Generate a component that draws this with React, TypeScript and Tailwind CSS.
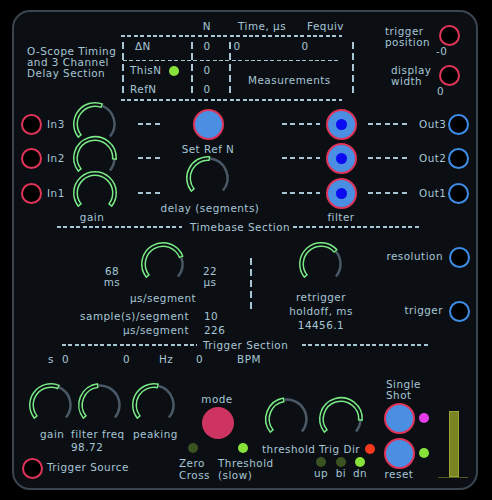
import React from "react";

// dashed rules and bars, drawn as repeating gradients
const DASH =
  "h-[1.5px] shrink-0 bg-[repeating-linear-gradient(90deg,#a8c6d4_0_4px,transparent_4px_6.4px)]";
const BIGDASH =
  "h-[1.5px] shrink-0 bg-[repeating-linear-gradient(90deg,#a8c6d4_0_5px,transparent_5px_8.4px)]";
const VBAR =
  "w-[1.5px] h-[54px] shrink-0 bg-[repeating-linear-gradient(180deg,#a8c6d4_0_7px,transparent_7px_11px)]";

const polar = (a: number, r: number) => {
  const rad = (a * Math.PI) / 180;
  return [23 + r * Math.sin(rad), 23 - r * Math.cos(rad)];
};

const arc = (a0: number, a1: number, r = 19.5) => {
  const [x0, y0] = polar(a0, r);
  const [x1, y1] = polar(a1, r);
  const large = a1 - a0 > 180 ? 1 : 0;
  return `M ${x0} ${y0} A ${r} ${r} 0 ${large} 1 ${x1} ${y1}`;
};

// value: pointer angle in degrees from top, -130..130
const Knob = ({ value, className = "" }: { value: number; className?: string }) => (
  <svg width="46" height="46" viewBox="0 0 46 46" className={`shrink-0 overflow-visible ${className}`}>
    {value < 129 && <path d={arc(value, 130)} stroke="#4a5866" strokeWidth="2.5" fill="none" />}
    <path d={arc(-130, value)} stroke="#7aeb86" strokeWidth="5" fill="none" />
    <path d={arc(-126, value - 4)} stroke="#0b0f14" strokeWidth="2" fill="none" />
  </svg>
);

const Jack = ({ blue = false, className = "" }: { blue?: boolean; className?: string }) => (
  <div
    className={`w-[21px] h-[21px] shrink-0 rounded-full border-2 bg-black ${
      blue ? "border-[#3e8ee8]" : "border-[#e03459]"
    } ${className}`}
  />
);

const Pad = ({ dot = false, className = "" }: { dot?: boolean; className?: string }) => (
  <div
    className={`w-[31px] h-[31px] shrink-0 rounded-full border-[2.5px] border-[#e03459] bg-[#4a8fe2] flex items-center justify-center ${className}`}
  >
    {dot && <div className="w-[11px] h-[11px] rounded-full bg-[#0b0bf2]" />}
  </div>
);

const Led = ({ className = "" }: { className?: string }) => (
  <div className={`w-[10px] h-[10px] shrink-0 rounded-full ${className}`} />
);

const channels = [
  { row: "row-start-1", name: "3", gain: 22 },
  { row: "row-start-2", name: "2", gain: 95 },
  { row: "row-start-3", name: "1", gain: 130 },
];

export default function App() {
  return (
    <div className="w-[492px] h-[500px] bg-black pt-[10px] pl-[12px] overflow-hidden font-['DejaVu_Sans',sans-serif] text-[10.4px] tracking-[0.5px] text-[#a8c6d4]">
      <div className="w-[466px] h-[480px] rounded-[18px] border-2 border-[#3a4550] bg-[#0b0f14] flex flex-col">
        {/* title, readout table, trigger position / display width */}
        <div className="h-[94px] shrink-0 flex whitespace-nowrap">
          <div className="w-[106px] shrink-0 pl-[13px] pt-[34px] leading-[11px]">
            <div>O-Scope Timing</div>
            <div>and 3 Channel</div>
            <div>Delay Section</div>
          </div>

          <div className="w-[238px] shrink-0 grid">
            <div className="col-start-1 row-start-1 flex flex-col">
              <div className="h-[8px]" />
              <div className="h-[12px] leading-[12px] flex">
                <span className="w-[80px] shrink-0" />
                <span className="w-[14px] shrink-0 text-center">N</span>
                <span className="w-[24px] shrink-0" />
                <span className="w-[69px] shrink-0">Time, μs</span>
                <span>Fequiv</span>
              </div>
              <div className="h-[8px] flex items-center">
                <div className={`ml-[1px] w-[221px] ${DASH}`} />
              </div>
              <div className="h-[12px] leading-[12px] flex">
                <span className="w-[15px] shrink-0" />
                <span className="w-[65px] shrink-0">ΔN</span>
                <span className="w-[14px] shrink-0 text-center">0</span>
                <span className="w-[16px] shrink-0" />
                <span className="w-[14px] shrink-0 text-center">0</span>
                <span className="w-[54px] shrink-0" />
                <span className="w-[14px] shrink-0 text-center">0</span>
              </div>
              <div className="h-[4px]" />
              <div className="h-[9px] flex items-center">
                <div className={`ml-[3px] w-[218px] ${DASH}`} />
              </div>
              <div className="h-[11px] leading-[11px] flex items-center">
                <span className="w-[10px] shrink-0" />
                <span className="w-[39px] shrink-0">ThisN</span>
                <Led className="bg-[#86e23b]" />
                <span className="w-[21px] shrink-0" />
                <span className="w-[14px] shrink-0 text-center">0</span>
              </div>
              <div className="h-[8px] leading-[8px] flex">
                <span className="w-[128px] shrink-0" />
                <span>Measurements</span>
              </div>
              <div className="h-[10px] leading-[10px] flex">
                <span className="w-[10px] shrink-0" />
                <span className="w-[70px] shrink-0">RefN</span>
                <span className="w-[14px] shrink-0 text-center">0</span>
              </div>
              <div className="h-[12px] flex items-center">
                <div className={`ml-[1px] w-[221px] ${DASH}`} />
              </div>
            </div>
            <div className="col-start-1 row-start-1 pt-[30px] flex items-start">
              <div className={`ml-[2px] ${VBAR}`} />
              <div className={`ml-[67.5px] ${VBAR}`} />
              <div className={`ml-[36.5px] ${VBAR}`} />
              <div className={`ml-[121.5px] ${VBAR}`} />
            </div>
          </div>

          <div className="w-[118px] shrink-0 flex flex-col">
            <div className="pt-[13px] flex items-start">
              <div className="ml-[27px] w-[53.5px] shrink-0 mt-[1px] leading-[11px]">
                <div>trigger</div>
                <div>position</div>
              </div>
              <Jack />
            </div>
            <div className="ml-[78px] -mt-[2px] leading-[10px]">-0</div>
            <div className="pt-[8.5px] flex items-start">
              <div className="ml-[33px] w-[47.5px] shrink-0 mt-[0.5px] leading-[11px]">
                <div>display</div>
                <div>width</div>
              </div>
              <Jack />
            </div>
            <div className="ml-[79px] -mt-[1px] leading-[10px]">0</div>
          </div>
        </div>

        {/* input / delay / filter / output channels */}
        <div className="h-[116px] shrink-0 grid grid-cols-[33px_25px_46px_62px_56px_90px_30px_61px_31px_22px] grid-rows-[36px_32px_38px_10px] whitespace-nowrap leading-[12px]">
          {channels.map((c) => (
            <React.Fragment key={c.name}>
              <div className={`${c.row} col-start-1 flex items-center`}>
                <Jack className="ml-[7px]" />
              </div>
              <div className={`${c.row} col-start-2 flex items-center`}>In{c.name}</div>
              <div className={`${c.row} col-start-3 flex items-center justify-center`}>
                <Knob value={c.gain} />
              </div>
              <div className={`${c.row} col-start-4 flex items-center justify-center`}>
                <div className={`w-[22px] ${BIGDASH}`} />
              </div>
              <div className={`${c.row} col-start-6 flex items-center`}>
                <div className={`ml-[46px] w-[38px] ${BIGDASH}`} />
              </div>
              <div className={`${c.row} col-start-7 flex items-center justify-center`}>
                <Pad dot />
              </div>
              <div className={`${c.row} col-start-8 flex items-center`}>
                <div className={`ml-[12px] w-[39px] ${BIGDASH}`} />
              </div>
              <div className={`${c.row} col-start-9 flex items-center pl-[2px]`}>Out{c.name}</div>
              <div className={`${c.row} col-start-10 flex items-center`}>
                <Jack blue />
              </div>
            </React.Fragment>
          ))}
          <div className="col-start-5 row-start-1 row-span-4 flex flex-col items-center">
            <Pad className="mt-[3px]" />
            <div className="mt-[4px] leading-[10px]">Set Ref N</div>
            <Knob className="mt-[1px]" value={6} />
            <div className="mt-[2px] ml-[4px] leading-[10px]">delay (segments)</div>
          </div>
          <div className="row-start-4 col-start-3 flex justify-center pr-[6px] leading-[10px]">gain</div>
          <div className="row-start-4 col-start-7 flex justify-center leading-[10px]">filter</div>
        </div>

        {/* timebase */}
        <div className="h-[10px] shrink-0 flex items-center whitespace-nowrap leading-[10px]">
          <div className={`ml-[43px] w-[125px] ${DASH}`} />
          <span className="ml-[8px] w-[103px] shrink-0">Timebase Section</span>
          <div className={`w-[127px] ${DASH}`} />
        </div>

        <div className="h-[106px] shrink-0 flex whitespace-nowrap">
          <div className="w-[226px] shrink-0 flex flex-col">
            <div className="pt-[9px] flex items-start">
              <div className="ml-[82px] w-[32px] shrink-0 mt-[24.5px] leading-[11px] text-center">
                <div>68</div>
                <div>ms</div>
              </div>
              <Knob className="ml-[12px]" value={70} />
              <div className="ml-[8px] w-[32px] shrink-0 mt-[24.5px] leading-[11px] text-center">
                <div>22</div>
                <div>μs</div>
              </div>
            </div>
            <div className="mt-[5px] ml-[126px] w-[46px] flex justify-center leading-[10px]">μs/segment</div>
            <div className="mt-[6.5px] flex leading-[14px]">
              <span className="w-[175px] shrink-0 text-right">sample(s)/segment</span>
              <span className="ml-[15px]">10</span>
            </div>
            <div className="flex leading-[14px]">
              <span className="w-[175px] shrink-0 text-right">μs/segment</span>
              <span className="ml-[15px]">226</span>
            </div>
          </div>
          <div className="w-[22px] shrink-0 pt-[26px]">
            <div className={`ml-[10px] ${VBAR}`} />
          </div>
          <div className="w-[118px] shrink-0 flex flex-col items-center pt-[9px]">
            <Knob value={50} />
            <div className="mt-[3px] leading-[14px] text-center">
              <div>retrigger</div>
              <div>holdoff, ms</div>
              <div>14456.1</div>
            </div>
          </div>
          <div className="w-[96px] shrink-0 flex flex-col items-end pr-[6.5px]">
            <div className="mt-[14.5px] flex items-center gap-[5.5px]">
              <span>resolution</span>
              <Jack blue />
            </div>
            <div className="mt-[33px] flex items-center gap-[5.5px]">
              <span>trigger</span>
              <Jack blue />
            </div>
          </div>
        </div>

        {/* trigger */}
        <div className="h-[28px] shrink-0 flex flex-col whitespace-nowrap">
          <div className="h-[14px] flex items-center leading-[14px]">
            <div className={`ml-[48px] w-[135px] ${DASH}`} />
            <span className="ml-[6px] w-[99px] shrink-0">Trigger Section</span>
            <div className={`w-[128px] ${DASH}`} />
          </div>
          <div className="h-[14px] flex leading-[14px]">
            <span className="w-[34px] shrink-0" />
            <span className="w-[14px] shrink-0">s</span>
            <span className="w-[61px] shrink-0">0</span>
            <span className="w-[36px] shrink-0">0</span>
            <span className="w-[37px] shrink-0">Hz</span>
            <span className="w-[41px] shrink-0">0</span>
            <span>BPM</span>
          </div>
        </div>

        <div className="flex-1 flex whitespace-nowrap">
          <div className="w-[161px] shrink-0 flex flex-col">
            <div className="pt-[16px] pl-[14px] flex">
              <Knob value={24} />
              <Knob className="ml-[3px]" value={-5} />
              <Knob className="ml-[8px]" value={13} />
            </div>
            <div className="flex leading-[12px]">
              <span className="ml-[26px] w-[31px] shrink-0">gain</span>
              <span className="w-[62px] shrink-0">filter freq</span>
              <span>peaking</span>
            </div>
            <div className="ml-[57px] leading-[14px]">98.72</div>
            <div className="mt-[3.5px] flex items-center">
              <Jack className="ml-[7.5px]" />
              <span className="ml-[4.5px]">Trigger Source</span>
            </div>
          </div>

          <div className="w-[87px] shrink-0 flex flex-col">
            <div className="pt-[27px] w-[84px] text-center leading-[12px]">mode</div>
            <div className="mt-[2px] ml-[27px] w-[32px] h-[32px] rounded-full bg-[#cd3461]" />
            <div className="mt-[4px] flex">
              <Led className="ml-[13px] bg-[#3b5222]" />
              <Led className="ml-[40px] bg-[#86e23b]" />
            </div>
            <div className="mt-[4px] flex leading-[12px]">
              <div className="ml-[4px] w-[39px] shrink-0">
                <div>Zero</div>
                <div>Cross</div>
              </div>
              <div>
                <div>Threshold</div>
                <div>(slow)</div>
              </div>
            </div>
          </div>

          <div className="w-[118px] shrink-0 flex flex-col">
            <div className="pt-[30px] flex">
              <Knob className="ml-[2px]" value={-8} />
              <Knob className="ml-[8px]" value={95} />
            </div>
            <div className="mt-[1px] flex items-center leading-[12px]">
              <span className="w-[57px] shrink-0">threshold</span>
              <span className="w-[46px] shrink-0">Trig Dir</span>
              <Led className="bg-[#f5391c]" />
            </div>
            <div className="mt-[2px] flex">
              <Led className="ml-[54px] bg-[#3b5222]" />
              <Led className="ml-[10px] bg-[#3b5222]" />
              <Led className="ml-[9px] bg-[#86e23b]" />
            </div>
            <div className="flex leading-[12px]">
              <span className="ml-[49px] w-[20px] shrink-0 text-center">up</span>
              <span className="w-[20px] shrink-0 text-center">bi</span>
              <span className="w-[18px] shrink-0 text-center">dn</span>
            </div>
          </div>

          <div className="w-[55px] shrink-0 flex flex-col">
            <div className="pt-[12.5px] ml-[6px] leading-[11px]">
              <div>Single</div>
              <div>Shot</div>
            </div>
            <div className="mt-[2px] ml-[3.5px] flex items-center">
              <Pad />
              <Led className="ml-[4.5px] bg-[#e33ee8]" />
            </div>
            <div className="mt-[4px] ml-[3.5px] flex items-center">
              <Pad />
              <Led className="ml-[4.5px] bg-[#86e23b]" />
            </div>
            <div className="ml-[3.5px] w-[31px] flex justify-center leading-[10px]">reset</div>
          </div>

          <div className="flex-1 flex flex-col pt-[45px]">
            <div className="ml-[14px] w-[10px] h-[66px] bg-[#7b8423] border border-[#9aa631]" />
            <div className="ml-[3px] w-[30px] h-px bg-[#4f5c1d]" />
          </div>
        </div>
      </div>
    </div>
  );
}
